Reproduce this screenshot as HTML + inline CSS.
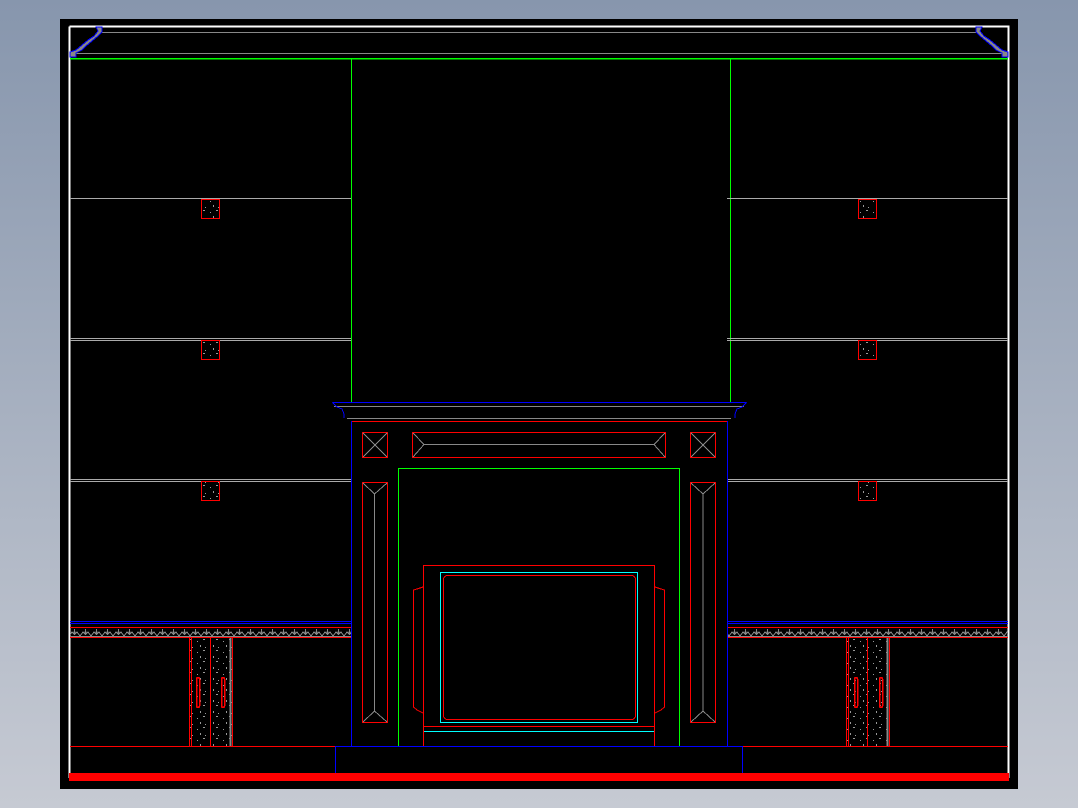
<!DOCTYPE html>
<html><head><style>
html,body{margin:0;padding:0;width:1078px;height:808px;overflow:hidden;background:linear-gradient(#8796ad,#c6cad3);}
svg{position:absolute;left:0;top:0}
</style></head><body>
<svg width="1078" height="808" viewBox="0 0 1078 808" shape-rendering="crispEdges" fill="none" stroke-width="1">
<defs>
<pattern id="frz" x="69" y="628" width="11" height="9" patternUnits="userSpaceOnUse">
<path d="M0 8 L3 4 L5 6 L5.5 1 L6 6 L8 4 L11 8" stroke="#888"/>
<path d="M0 8.5H11" stroke="#888"/>
</pattern>
<pattern id="spk" width="13" height="11" patternUnits="userSpaceOnUse">
<rect x="2" y="3" width="1" height="1" fill="#999"/><rect x="8" y="1" width="2" height="1" fill="#999"/>
<rect x="5" y="7" width="1" height="2" fill="#999"/><rect x="10" y="9" width="1" height="1" fill="#999"/>
</pattern>
</defs>
<rect x="60" y="19" width="958" height="770" fill="#000"/>
<path d="M69.5 26.5H1008.5V778M69.5 26.5V778" stroke="#fff" stroke-width="2"/>
<path d="M100 32.5H978M74 53.5H1004" stroke="#888" stroke-width="1.2"/>
<path d="M70 57 V52 L76 50 L82 45 L88 40 L94 36 L98 31 L96 27 H102 V32 L98 36 L92 41 L86 46 L82 50 L76 53 V57Z" fill="#888" stroke="#00f"/>
<path d="M1008 57 V52 L1002 50 L996 45 L990 40 L984 36 L980 31 L982 27 H976 V32 L980 36 L986 41 L992 46 L996 50 L1002 53 V57Z" fill="#888" stroke="#00f"/>
<path d="M70 58.5H1008" stroke="#0f0" stroke-width="1.5"/>
<rect x="351.5" y="58.5" width="379" height="344" stroke="#0f0"/>
<g stroke="#aaa">
<path d="M70 198.5H351M727 198.5H1008M70 338.5H351M727 338.5H1008M70 340.5H351M727 340.5H1008M70 479.5H351M727 479.5H1008M70 481.5H351M727 481.5H1008"/>
</g>
<g stroke="#f00" fill="url(#spk)">
<rect x="201.5" y="199.5" width="18" height="19"/><rect x="858.5" y="199.5" width="18" height="19"/>
<rect x="201.5" y="340.5" width="18" height="19"/><rect x="858.5" y="340.5" width="18" height="19"/>
<rect x="201.5" y="481.5" width="18" height="19"/><rect x="858.5" y="481.5" width="18" height="19"/>
</g>
<g>
<path d="M70 621.5H351M727 621.5H1008M70 623.5H351M727 623.5H1008" stroke="#00f"/>
<rect x="70" y="627" width="281" height="10" fill="url(#frz)"/>
<rect x="727" y="627" width="281" height="10" fill="url(#frz)"/>
<path d="M70 627.5H351M727 627.5H1008M70 637.5H351M727 637.5H1008" stroke="#f00"/>
</g>
<g>
<rect x="190" y="638" width="42" height="108" fill="url(#spk)"/>
<path d="M189.5 638V746M191.5 638V746M210.5 638V746M232.5 638V746" stroke="#f00"/>
<path d="M230.5 638V746" stroke="#888" stroke-width="2"/>
<rect x="196.5" y="677.5" width="3" height="30" rx="1.5" stroke="#f00" stroke-width="1.5"/>
<rect x="221.5" y="677.5" width="3" height="30" rx="1.5" stroke="#f00" stroke-width="1.5"/>
<rect x="847" y="638" width="42" height="108" fill="url(#spk)"/>
<path d="M846.5 638V746M848.5 638V746M867.5 638V746M889.5 638V746" stroke="#f00"/>
<path d="M887.5 638V746" stroke="#888" stroke-width="2"/>
<rect x="854.5" y="677.5" width="3" height="30" rx="1.5" stroke="#f00" stroke-width="1.5"/>
<rect x="879.5" y="677.5" width="3" height="30" rx="1.5" stroke="#f00" stroke-width="1.5"/>
</g>
<!-- mantel -->
<path d="M334 406.5H744M347 418.5H731" stroke="#888"/>
<path d="M332.5 402.5H746.5M332.5 402.5L337 407 L342 409 L344 414 V418 M746.5 402.5L742 407 L737 409 L735 414 V418" stroke="#00f"/>
<path d="M351 421.5H727" stroke="#f00"/>
<path d="M351.5 421V746M727.5 421V746" stroke="#00f"/>
<g stroke="#f00">
<rect x="362.5" y="432.5" width="25" height="25"/><rect x="690.5" y="432.5" width="25" height="25"/>
<rect x="412.5" y="432.5" width="253" height="25"/>
<rect x="362.5" y="482.5" width="25" height="240"/><rect x="690.5" y="482.5" width="25" height="240"/>
</g>
<g stroke="#888">
<path d="M363 433L387 457M387 433L363 457M691 433L715 457M715 433L691 457"/>
<path d="M413 433L424 444.5H654L665 433M413 457L424 444.5M654 444.5L665 457"/>
<path d="M363 483L374.5 494V711L363 722M387 483L374.5 494M387 722L374.5 711"/>
<path d="M691 483L703 494V711L691 722M715 483L703 494M715 722L703 711"/>
</g>
<rect x="398.5" y="468.5" width="281" height="278" stroke="#0f0"/>
<rect x="423.5" y="565.5" width="231" height="181" stroke="#f00"/>
<path d="M423 726.5H655" stroke="#f00"/>
<path d="M424 731.5H654" stroke="#0ff"/>
<rect x="440.5" y="572.5" width="197" height="150" stroke="#0ff"/>
<rect x="443.5" y="575.5" width="192" height="144" rx="4" stroke="#f00"/>
<path d="M423 587L417 589L413.5 590V707L417 710L423 713M655 587L661 589L664.5 590V707L661 710L655 713" stroke="#f00"/>
<path d="M70 746.5H1008" stroke="#f00"/>
<path d="M335.5 746.5H742.5M335.5 746V776M742.5 746V776" stroke="#00f"/>
<rect x="69" y="773" width="940" height="8" fill="#f00"/>
</svg>
</body></html>
